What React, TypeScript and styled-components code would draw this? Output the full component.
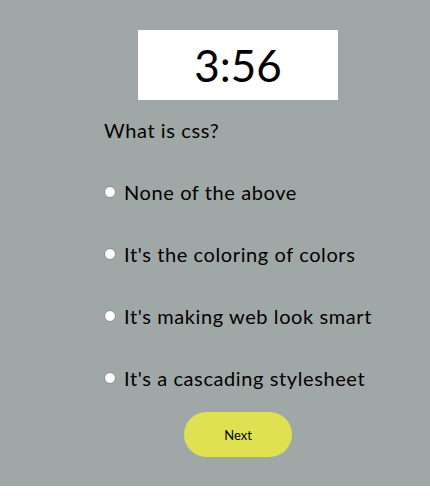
import React, { useState } from "react";
import styled, { createGlobalStyle } from "styled-components";

const Global = createGlobalStyle`
  html, body { margin: 0; padding: 0; background: #ffffff; }
  body { font-family: Lato, "Noto Sans", sans-serif; }
`;

const Page = styled.div`
  background: #a0a8a7;
  height: 486px;
  box-sizing: border-box;
  padding: 30px 0 0 104px;
`;

const Quiz = styled.div`
  width: 268px;
  display: flex;
  flex-direction: column;
  align-items: stretch;
`;

const Timer = styled.div`
  align-self: center;
  width: 200px;
  height: 70px;
  background: #ffffff;
  display: flex;
  align-items: center;
  justify-content: center;
  font-size: 44px;
  color: #000;
`;

const Question = styled.h2`
  margin: 18px 0 0;
  font-size: 20px;
  font-weight: 400;
  line-height: 24px;
  letter-spacing: 0.6px;
  color: #000;
`;

const Options = styled.div`
  display: flex;
  flex-direction: column;
  gap: 38px;
  margin-top: 38px;
`;

const Option = styled.label`
  display: flex;
  align-items: center;
  gap: 8px;
  font-size: 20px;
  line-height: 24px;
  color: #000;
  letter-spacing: 0.6px;
  white-space: nowrap;
`;

const Radio = styled.input.attrs({ type: "radio" })`
  appearance: none;
  margin: 0;
  width: 12px;
  height: 12px;
  border-radius: 50%;
  background: #ffffff;
  border: 1px solid #8a8a8a;
  box-sizing: border-box;
  flex: none;
`;

const NextButton = styled.button`
  align-self: center;
  margin-top: 22px;
  width: 108px;
  height: 45px;
  border: none;
  border-radius: 23px;
  background: #dfe052;
  color: #000;
  font-family: Lato, sans-serif;
  font-size: 13px;
`;

const options = [
  "None of the above",
  "It's the coloring of colors",
  "It's making web look smart",
  "It's a cascading stylesheet",
];

export default function App() {
  const [sel, setSel] = useState<number | null>(null);
  return (
    <>
      <Global />
      <Page>
        <Quiz>
          <Timer>3:56</Timer>
          <Question>What is css?</Question>
          <Options>
            {options.map((o, i) => (
              <Option key={o}>
                <Radio name="q" checked={sel === i} onChange={() => setSel(i)} />
                {o}
              </Option>
            ))}
          </Options>
          <NextButton>Next</NextButton>
        </Quiz>
      </Page>
    </>
  );
}
